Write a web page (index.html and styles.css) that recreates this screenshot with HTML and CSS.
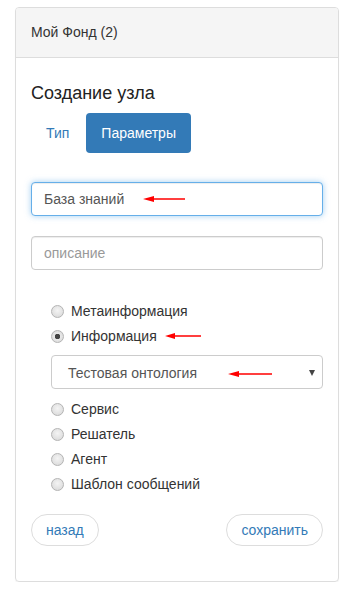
FILE: index.html
```html
<!DOCTYPE html>
<html lang="ru">
<head>
    <meta charset="UTF-8" />
    <title>Мой Фонд</title>
    <link rel="stylesheet" href="styles.css">
</head>
<body>
<div class="panel">
    <div class="panel-heading">Мой Фонд (2)</div>
    <div class="panel-body">
        <h4>Создание узла</h4>
        <ul class="nav-pills">
            <li><a href="#">Тип</a></li>
            <li class="active"><a href="#">Параметры</a></li>
        </ul>

        <div class="field first">
            <input type="text" class="form-control focused" value="База знаний" />
            <svg class="arrow" style="left:112px" width="42" height="8" viewBox="0 0 42 8"><path d="M42 3.2H11V1L0 4l11 3V4.8h31z" fill="#f00"/></svg>
        </div>
        <div class="field">
            <input type="text" class="form-control" placeholder="описание" />
        </div>

        <div class="types">
            <label class="radio"><input type="radio" name="type" /> Метаинформация</label>
            <label class="radio"><input type="radio" name="type" checked /> Информация
                <svg class="arrow inline" width="36" height="8" viewBox="0 0 36 8"><path d="M36 3.2H10V1L0 4l10 3V4.8h26z" fill="#f00"/></svg>
            </label>
            <div class="select-wrap">
                <div class="select">Тестовая онтология
                    <svg class="arrow inline wide" width="44" height="8" viewBox="0 0 44 8"><path d="M44 3.2H11V1L0 4l11 3V4.8h33z" fill="#f00"/></svg>
                </div>
                <span class="caret"></span>
            </div>
            <label class="radio"><input type="radio" name="type" /> Сервис</label>
            <label class="radio"><input type="radio" name="type" /> Решатель</label>
            <label class="radio"><input type="radio" name="type" /> Агент</label>
            <label class="radio"><input type="radio" name="type" /> Шаблон сообщений</label>
        </div>

        <div class="actions">
            <button class="btn-round">назад</button>
            <button class="btn-round">сохранить</button>
        </div>
    </div>
</div>
</body>
</html>
```

FILE: styles.css
```css
body {
    margin: 0;
    padding: 7px 9px 0 15px;
    font-family: "Liberation Sans", Arial, sans-serif;
    font-size: 14px;
    line-height: 20px;
    color: #333;
    background: #fff;
}
.panel {
    border: 1px solid #ddd;
    border-radius: 4px;
    box-shadow: 0 1px 1px rgba(0,0,0,0.05);
}
.panel-heading {
    background: #f5f5f5;
    border-bottom: 1px solid #ddd;
    border-radius: 3px 3px 0 0;
    padding: 14px 15px 15px;
}
.panel-body { padding: 15px 15px 35px; }
h4 {
    font-size: 18px;
    font-weight: 500;
    line-height: 20px;
    margin: 10px 0;
    color: #222;
}
.nav-pills { list-style: none; margin: 0; padding: 0; display: flex; gap: 2px; }
.nav-pills a {
    display: block;
    padding: 10px 15px;
    color: #337ab7;
    text-decoration: none;
    border-radius: 4px;
}
.nav-pills .active a { background: #337ab7; color: #fff; }
.field { position: relative; margin-bottom: 20px; }
.field.first { margin-top: 29px; }
.form-control {
    box-sizing: border-box;
    width: 100%;
    height: 34px;
    padding: 6px 12px;
    font: inherit;
    color: #555;
    border: 1px solid #ccc;
    border-radius: 4px;
    box-shadow: inset 0 1px 1px rgba(0,0,0,0.075);
    outline: none;
}
.form-control::placeholder { color: #999; }
.form-control.focused {
    border-color: #66afe9;
    box-shadow: inset 0 1px 1px rgba(0,0,0,0.075), 0 0 6px rgba(102,175,233,0.6);
}
.arrow { position: absolute; top: 13px; }
.arrow.inline { position: relative; top: 0; margin-left: 8px; vertical-align: middle; }
.arrow.wide { margin-left: 27px; }
.types { padding-left: 20px; margin-top: 31px; }
.radio {
    display: flex;
    align-items: center;
    height: 20px;
    margin-bottom: 5px;
}
.radio input {
    appearance: none;
    box-sizing: border-box;
    width: 13px;
    height: 13px;
    margin: 0 7px 0 0;
    border: 1px solid #b4b4b4;
    border-radius: 50%;
    background: radial-gradient(circle at 50% 40%, #f4f4f4, #d6d6d6);
}
.radio input:checked {
    background: radial-gradient(circle, #444 0 2.5px, #e8e8e8 3px, #d6d6d6);
}
.select-wrap { position: relative; margin: 9px 0 10px; }
.select {
    box-sizing: border-box;
    height: 34px;
    padding: 7px 16px;
    border: 1px solid #ccc;
    border-radius: 4px;
    color: #555;
}
.caret {
    position: absolute;
    right: 8px;
    top: 15px;
    border-left: 3.5px solid transparent;
    border-right: 3.5px solid transparent;
    border-top: 6px solid #444;
}
.actions {
    display: flex;
    justify-content: space-between;
    margin-top: 20px;
}
.btn-round {
    font: inherit;
    color: #337ab7;
    background: #fff;
    border: 1px solid #ddd;
    border-radius: 16px;
    height: 32px;
    padding: 0 14px;
}
```
